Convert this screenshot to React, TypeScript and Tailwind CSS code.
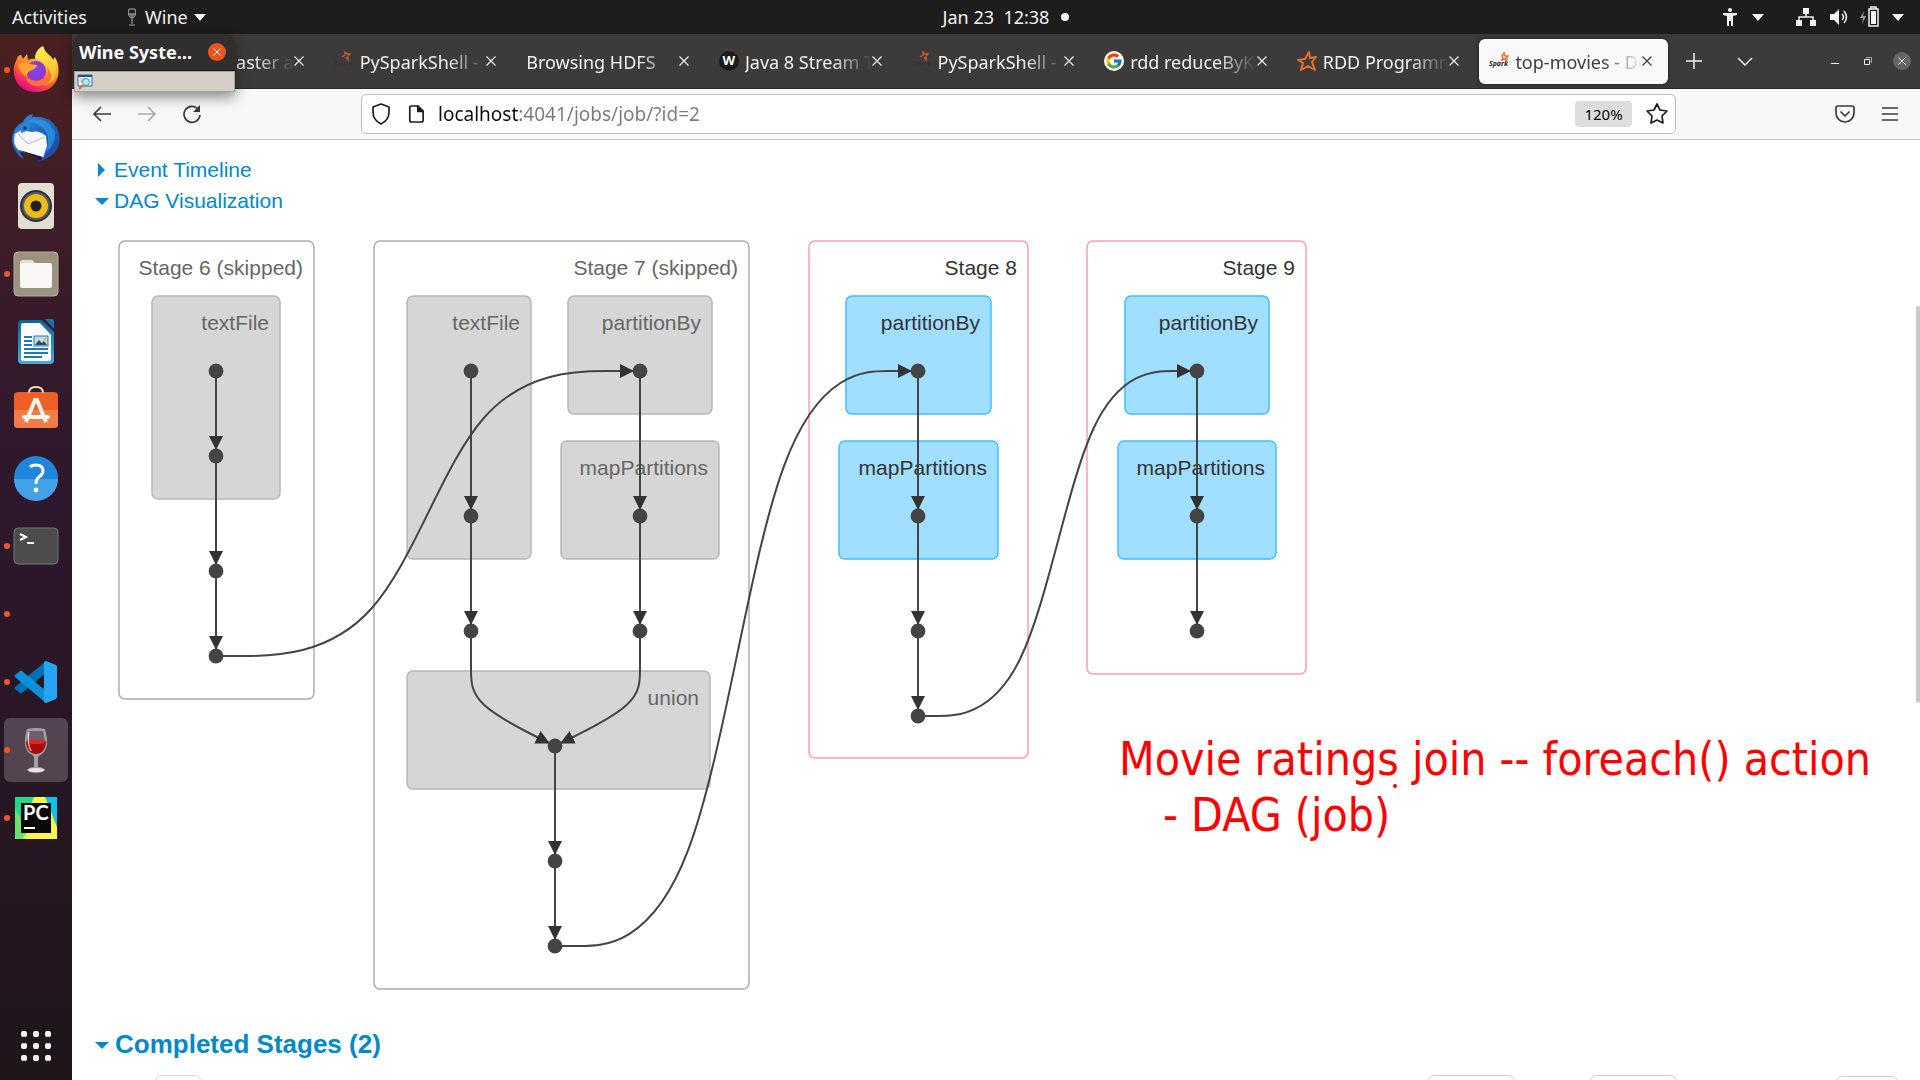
import React from "react";
import { FcGoogle } from "react-icons/fc";

type Pt = [number, number];

/* ---------- DAG geometry ---------- */

function basis(points: Pt[]): string {
  const n = points.length;
  const at = (i: number): Pt => points[Math.max(0, Math.min(n - 1, i))];
  const mix = (a: Pt, b: Pt, wa: number, wb: number): string =>
    `${((a[0] * wa + b[0] * wb) / (wa + wb)).toFixed(1)},${((a[1] * wa + b[1] * wb) / (wa + wb)).toFixed(1)}`;
  let d = `M${points[0]} L${mix(at(0), at(1), 5, 1)}`;
  for (let i = 0; i < n - 1; i++) {
    const a = at(i);
    const b = at(i + 1);
    const c = at(i + 2);
    const end = `${((a[0] + 4 * b[0] + c[0]) / 6).toFixed(1)},${((a[1] + 4 * b[1] + c[1]) / 6).toFixed(1)}`;
    d += ` C${mix(a, b, 2, 1)} ${mix(a, b, 1, 2)} ${end}`;
  }
  return d + ` L${points[n - 1]}`;
}

function cross(from: Pt, to: Pt): string {
  const dx = to[0] - from[0];
  return basis([from, [from[0] + dx * 0.4, from[1]], [from[0] + dx * 0.6, to[1]], [to[0] - 7, to[1]]]);
}

interface Box {
  x: number;
  y: number;
  w: number;
  h: number;
  label: string;
  kind: "skippedStage" | "stage" | "skippedOp" | "op";
}

const boxStyle: Record<Box["kind"], string> = {
  skippedStage: "fill-white stroke-[#adadad]",
  stage: "fill-white stroke-[#ff9db0]",
  skippedOp: "fill-[#d6d6d6] stroke-[#b7b7b7]",
  op: "fill-[#a0dfff] stroke-[#3ec0ff]",
};
const labelStyle: Record<Box["kind"], string> = {
  skippedStage: "fill-[#666666]",
  stage: "fill-[#333333]",
  skippedOp: "fill-[#666666]",
  op: "fill-[#333333]",
};

const boxes: Box[] = [
  { x: 47, y: 21, w: 195, h: 458, label: "Stage 6 (skipped)", kind: "skippedStage" },
  { x: 302, y: 21, w: 375, h: 748, label: "Stage 7 (skipped)", kind: "skippedStage" },
  { x: 737, y: 21, w: 219, h: 517, label: "Stage 8", kind: "stage" },
  { x: 1015, y: 21, w: 219, h: 433, label: "Stage 9", kind: "stage" },
  { x: 80, y: 76, w: 128, h: 203, label: "textFile", kind: "skippedOp" },
  { x: 335, y: 76, w: 124, h: 263, label: "textFile", kind: "skippedOp" },
  { x: 496, y: 76, w: 144, h: 118, label: "partitionBy", kind: "skippedOp" },
  { x: 489, y: 221, w: 158, h: 118, label: "mapPartitions", kind: "skippedOp" },
  { x: 335, y: 451, w: 303, h: 118, label: "union", kind: "skippedOp" },
  { x: 774, y: 76, w: 145, h: 118, label: "partitionBy", kind: "op" },
  { x: 767, y: 221, w: 159, h: 118, label: "mapPartitions", kind: "op" },
  { x: 1053, y: 76, w: 144, h: 118, label: "partitionBy", kind: "op" },
  { x: 1046, y: 221, w: 158, h: 118, label: "mapPartitions", kind: "op" },
];

const chains: Pt[][] = [
  [[144, 151], [144, 236], [144, 351], [144, 436]],
  [[399, 151], [399, 296], [399, 411]],
  [[568, 151], [568, 296], [568, 411]],
  [[483, 526], [483, 641], [483, 726]],
  [[846, 151], [846, 296], [846, 411], [846, 496]],
  [[1125, 151], [1125, 296], [1125, 411]],
];

const curves: string[] = [
  cross([144, 436], [568, 151]),
  cross([483, 726], [846, 151]),
  cross([846, 496], [1125, 151]),
  basis([[399, 411], [399, 450], [399, 484], [477, 523]]),
  basis([[568, 411], [568, 450], [568, 484], [489, 523]]),
];

function Dag() {
  return (
    <svg viewBox="0 0 1260 790" className="block h-[790px] w-[1260px]" role="img" aria-label="DAG Visualization">
      <defs>
        <marker id="arrow" viewBox="0 0 14 14" refX="13" refY="7" markerWidth="14" markerHeight="14" markerUnits="userSpaceOnUse" orient="auto">
          <path d="M0 0L14 7L0 14z" fill="#333" />
        </marker>
      </defs>
      {boxes.map((b, i) => (
        <g key={i}>
          <rect x={b.x} y={b.y} width={b.w} height={b.h} rx="6" strokeWidth="1.5" className={boxStyle[b.kind]} />
          <text x={b.x + b.w - 11} y={b.y + 34} textAnchor="end" fontSize="21" className={labelStyle[b.kind]}>
            {b.label}
          </text>
        </g>
      ))}
      <g fill="none" stroke="#444" strokeWidth="2">
        {chains.map((c, i) =>
          c.slice(1).map((p, j) => (
            <path key={`${i}-${j}`} d={`M${c[j]} L${p[0]},${p[1] - 7}`} markerEnd="url(#arrow)" />
          )),
        )}
        {curves.map((d, i) => (
          <path key={i} d={d} markerEnd="url(#arrow)" />
        ))}
      </g>
      {chains.map((c, i) => c.map((p, j) => <circle key={`${i}-${j}`} cx={p[0]} cy={p[1]} r="7.400" fill="#444" />))}
    </svg>
  );
}

/* ---------- Dock icons ---------- */

const Firefox = () => (
  <svg viewBox="0 0 48 48" className="size-12">
    <defs>
      <linearGradient id="ffa" x1="0.8" y1="0.05" x2="0.3" y2="1">
        <stop offset="0" stopColor="#fff44f" />
        <stop offset="0.35" stopColor="#ffa930" />
        <stop offset="0.65" stopColor="#ff5a36" />
        <stop offset="1" stopColor="#e3008d" />
      </linearGradient>
      <linearGradient id="ffy" x1="0" y1="0" x2="0.3" y2="1">
        <stop offset="0" stopColor="#fff65a" />
        <stop offset="1" stopColor="#ffb62c" />
      </linearGradient>
      <radialGradient id="ffp">
        <stop offset="0" stopColor="#7a4af0" />
        <stop offset="1" stopColor="#9434c8" />
      </radialGradient>
    </defs>
    <path d="M4 15Q6 8 9 9L11 13L15 8L16 14Q20 12 23 13Q23 4 31 0Q32 5 37 9Q40 11 41 14L43 11Q48 20 46 30Q42 45 25 46Q5 46 2 28Q1 20 4 15z" fill="url(#ffa)" />
    <path d="M23 13Q23 4 31 0Q32 5 37 9Q47 18 43 31Q39 40 29 39Q39 32 34 21Q31 15 23 13z" fill="url(#ffy)" />
    <circle cx="24" cy="25" r="10" fill="url(#ffp)" />
    <path d="M6 18Q13 15 18 18L25 19Q25 22 20 24Q14 26 15 31Q7 27 6 18z" fill="#ffa52f" />
    <path d="M14 30Q20 37 29 34Q40 30 34 20Q43 30 36 37Q27 43 18 38Q14 35 14 30z" fill="#ff7139" />
  </svg>
);

const Thunderbird = () => (
  <svg viewBox="0 0 48 48" className="size-12">
    <defs>
      <linearGradient id="tba" x1="0" y1="0" x2="1" y2="1">
        <stop offset="0" stopColor="#2f8fe0" />
        <stop offset="0.5" stopColor="#1f66c4" />
        <stop offset="1" stopColor="#1f3f9a" />
      </linearGradient>
    </defs>
    <path d="M11 8Q14 1 21 0L20 3Q37 1 45 14Q50 26 45 35Q39 45 25 48Q30 44 31 40L8 38L12 46Q1 38 0 27Q0 13 11 8z" fill="url(#tba)" />
    <path d="M3 20Q0 29 6 36L31 44L35 32L34 22Q27 16 20 18L9 16z" fill="#fafafa" />
    <path d="M6 20L16 30L33 23" fill="none" stroke="#b9bcc4" strokeWidth="1" />
    <path d="M4 35L31 43L28 47Q26 43 22 42z" fill="#1c1250" />
    <path d="M10 12Q20 5 28 12Q40 18 34 38Q44 30 43 18Q36 4 20 5z" fill="#2ea2e6" opacity="0.65" />
    <path d="M8 14Q10 8 17 9Q21 13 15 17L9 19z" fill="#2b84d2" />
    <circle cx="13" cy="14" r="1.6" fill="#0d2b52" />
  </svg>
);

const Rhythmbox = () => (
  <svg viewBox="0 0 48 48" className="size-12">
    <rect x="6" y="1" width="36" height="46" rx="4" fill="#e3ded3" />
    <circle cx="24" cy="24" r="16" fill="#2e3236" />
    <circle cx="24" cy="24" r="14" fill="#555a60" />
    <circle cx="24" cy="24" r="12" fill="#efb917" />
    <circle cx="24" cy="24" r="5.500" fill="#1f2226" />
  </svg>
);

const Files = () => (
  <svg viewBox="0 0 48 48" className="size-12">
    <rect x="2" y="2" width="44" height="44" rx="4" fill="#9b937f" stroke="#b5ad9b" />
    <path d="M8 13q0-3 3-3h9l4 4h12v10H8z" fill="#e4e0d6" />
    <rect x="8" y="13" width="32" height="25" rx="2" fill="#f9f8f6" />
  </svg>
);

const Writer = () => (
  <svg viewBox="0 0 48 48" className="size-12">
    <defs>
      <linearGradient id="wr" x1="0" y1="0" x2="0" y2="1">
        <stop offset="0" stopColor="#0d6496" />
        <stop offset="1" stopColor="#4aabdc" />
      </linearGradient>
    </defs>
    <path d="M10 2h20l12 12v28q0 4-4 4H10q-4 0-4-4V6q0-4 4-4z" fill="url(#wr)" />
    <path d="M33 1h7q2 0 2 2v8z" fill="#0f75ab" />
    <path d="M11 5h17l11 12v24q0 2-2 2H11q-2 0-2-2V7q0-2 2-2z" fill="#fdfdfd" />
    <path d="M12 19h8M12 23h8M12 27h8M12 31h24M12 35h24M12 39h18" stroke="#1b7cb5" strokeWidth="2" />
    <rect x="22" y="18" width="14" height="10" fill="#b8dff2" stroke="#1b7cb5" />
    <path d="M23 27l4-5 3 3 2-2 3 4z" fill="#3a4a55" />
    <circle cx="33" cy="21" r="1.500" fill="#f2b632" />
  </svg>
);

const Software = () => (
  <svg viewBox="0 0 48 48" className="size-12">
    <rect x="2" y="6" width="44" height="36" rx="4" fill="#ee5f26" />
    <path d="M2 24h44v14q0 4-4 4H6q-4 0-4-4z" fill="#f27c48" />
    <path d="M17 7q0-6 7-6t7 6" fill="none" stroke="#f5dfae" strokeWidth="2" />
    <path d="M14 36L23 14h2l9 22" fill="none" stroke="#fdf6f1" strokeWidth="4" />
    <path d="M12 31h24" stroke="#fdf6f1" strokeWidth="4" strokeLinecap="round" />
  </svg>
);

const Help = () => (
  <svg viewBox="0 0 48 48" className="size-12">
    <circle cx="24" cy="24" r="22" fill="#1f86dc" />
    <path d="M2 25a22 22 0 0 0 44 0z" fill="#43a2e6" />
    <path d="M18 13q2-2 6-2 7 0 7 6 0 3-4 6-3 2-3 7" fill="none" stroke="#fff" strokeWidth="3" />
    <circle cx="24" cy="36" r="2.400" fill="#fff" />
  </svg>
);

const Terminal = () => (
  <svg viewBox="0 0 48 48" className="size-12">
    <rect x="2" y="6" width="44" height="36" rx="4" fill="#4c4c4c" stroke="#747474" />
    <path d="M8 12l6 3-6 3M15 21h7" fill="none" stroke="#fff" strokeWidth="2" />
  </svg>
);

const VsCode = () => (
  <svg viewBox="0 0 48 48" className="size-12">
    <path d="M3 31l5 4q1 1 2 0L34 15V3L3 29q-1 1 0 2z" fill="#0070b3" />
    <path d="M3 17l5-4q1-1 2 0l24 20v12L3 19q-1-1 0-2z" fill="#0a91dc" />
    <path d="M34 3l10 4q1 1 1 2v30q0 1-1 2l-10 4q-2 0-2-2V5q0-2 2-2z" fill="#27a5f4" />
  </svg>
);

const WineGlass = () => (
  <svg viewBox="0 0 48 48" className="size-12">
    <path d="M15 3Q24 1 33 3Q38 20 31 27Q27 30 26 31V41Q33 42 33 44Q31 47 24 47T15 44Q16 42 22 41V31Q21 29 17 27Q10 20 15 3z" fill="#b9b3b8" opacity="0.8" />
    <path d="M17 5h14l2 10H15z" fill="#6d6069" />
    <path d="M14 15Q24 19 34 15Q34 22 30 26Q24 30 18 26Q14 22 14 15z" fill="#a80c0c" />
    <ellipse cx="24" cy="16" rx="9" ry="2" fill="#e2261c" />
    <path d="M17 6Q15 18 19 25" fill="none" stroke="#f5f0f3" strokeWidth="1" />
    <ellipse cx="24" cy="44" rx="8" ry="2" fill="#e9e6e8" />
  </svg>
);

const PyCharm = () => (
  <svg viewBox="0 0 48 48" className="size-12">
    <path d="M3 3h42v42H3z" fill="#21d789" />
    <path d="M34 3h11v30z" fill="#07c3f2" />
    <path d="M22 3h11l12 30v12H16L3 44L10 30z" fill="#fcf84a" />
    <path d="M3 14L16 38L10 45H3z" fill="#6be36b" />
    <path d="M9 9h30v30H9z" fill="#070707" />
    <path d="M12 34h11" stroke="#fff" strokeWidth="2" />
    <text x="11" y="26" fontSize="20" fontWeight="700" fill="#fff" fontFamily="Lato, sans-serif">PC</text>
  </svg>
);

const dock: { name: string; icon?: React.ReactNode; running?: boolean; active?: boolean }[] = [
  { name: "Firefox", icon: <Firefox />, running: true },
  { name: "Thunderbird", icon: <Thunderbird /> },
  { name: "Rhythmbox", icon: <Rhythmbox /> },
  { name: "Files", icon: <Files />, running: true },
  { name: "LibreOffice Writer", icon: <Writer /> },
  { name: "Ubuntu Software", icon: <Software /> },
  { name: "Help", icon: <Help /> },
  { name: "Terminal", icon: <Terminal />, running: true },
  { name: "Running application", running: true },
  { name: "Visual Studio Code", icon: <VsCode />, running: true },
  { name: "Wine", icon: <WineGlass />, running: true, active: true },
  { name: "PyCharm", icon: <PyCharm />, running: true },
];

function Dock() {
  return (
    <nav className="flex w-[72px] shrink-0 flex-col bg-linear-to-b from-[#4a2020] via-[#2f182e] via-40% to-[#20151b] pt-0.5">
      {dock.map((d) => (
        <button
          key={d.name}
          aria-label={d.name}
          className="relative flex h-[68px] shrink-0 items-center justify-center"
        >
          {d.active && <span className="absolute inset-x-1 inset-y-0.5 rounded-md bg-white/20" />}
          {d.running && <span className="absolute left-1 size-1.5 rounded-full bg-[#f0562a]" />}
          <span className="relative">{d.icon}</span>
        </button>
      ))}
      <button aria-label="Show Applications" className="mx-auto mt-auto mb-[19px] grid grid-cols-3 gap-1.5">
        {Array.from({ length: 9 }, (_, i) => (
          <span key={i} className="size-1.5 rounded-[2px] bg-[#f2f0ed]" />
        ))}
      </button>
    </nav>
  );
}

/* ---------- Top bar ---------- */

const Caret = () => (
  <svg viewBox="0 0 12 7" className="h-[7px] w-3">
    <path d="M0 0h12L6 7z" fill="#f2f2f2" />
  </svg>
);

function TopBar() {
  return (
    <header className="grid h-[34px] shrink-0 grid-cols-[1fr_auto_1fr] items-center bg-[#1d1d1d] text-[18px] text-[#f2f2f2]">
      <div className="flex items-center pl-3">
        <button>Activities</button>
        <button className="ml-10 flex items-center">
          <svg viewBox="0 0 10 18" className="mr-2 h-[18px] w-2.5" fill="none" stroke="#a5a5a5">
            <path d="M2 1h6q2 8-3 9Q0 9 2 1zM5 10v6M2 17h6" />
            <path d="M2 5h6v2q-1 2-3 2T2 7z" fill="#777" stroke="none" />
          </svg>
          Wine
          <span className="ml-1.5">
            <Caret />
          </span>
        </button>
      </div>
      <button className="flex items-center gap-3 pl-[92px]">
        <span className="whitespace-pre">Jan 23  12:38</span>
        <span className="size-2 rounded-full bg-[#f2f2f2]" />
      </button>
      <div className="flex items-center justify-end pr-4">
        <button aria-label="Accessibility" className="flex items-center gap-3.5">
          <svg viewBox="0 0 16 18" className="h-[18px] w-4" fill="#f2f2f2">
            <circle cx="8" cy="2" r="2" />
            <path d="M1 5h14v2l-4 1v10H9v-5H7v5H5V8L1 7z" />
          </svg>
          <Caret />
        </button>
        <button aria-label="System menu" className="ml-8 flex items-center">
          <svg viewBox="0 0 20 18" className="h-[18px] w-5" fill="#f2f2f2">
            <path d="M7 0h6v6H7zM0 12h6v6H0zM14 12h6v6h-6z" />
            <path d="M10 6v3M3 12V9h14v3" fill="none" stroke="#f2f2f2" strokeWidth="1.500" />
          </svg>
          <svg viewBox="0 0 20 18" className="ml-3.5 h-[18px] w-5" fill="#f2f2f2">
            <path d="M0 6h4l5-5v16l-5-5H0z" />
            <path d="M12 6q3 3 0 6M14 3q5 6 0 12" fill="none" stroke="#f2f2f2" strokeWidth="1.500" />
          </svg>
          <svg viewBox="0 0 20 22" className="ml-2.5 h-[22px] w-5">
            <path d="M4 5L0 12h3l-1 6 4-8H3z" fill="#9a9a9a" />
            <path d="M9 3h9v17H9zM11 1h5v2h-5z" fill="none" stroke="#f2f2f2" strokeWidth="1.500" />
            <path d="M11 5h5v13h-5z" fill="#f2f2f2" />
          </svg>
          <span className="ml-3">
            <Caret />
          </span>
        </button>
      </div>
    </header>
  );
}

/* ---------- Browser tabs ---------- */

const starPath = "M12 1L13 7L19 6L15 11L18 19L11 15L4 19L6 12L1 9L8 8z";

const DimSpark = () => (
  <svg viewBox="0 0 20 20" className="size-5 shrink-0">
    <text x="0" y="15" fontSize="7" fontStyle="italic" fontWeight="700" fill="#363433">Spark</text>
    <path d="M8 6l3-2 0-3 2 2 3 0-2 2 0 4-2-3" fill="none" stroke="#c95d2d" strokeWidth="1.300" />
  </svg>
);
const SparkFav = () => (
  <svg viewBox="0 0 20 20" className="size-5 shrink-0">
    <text x="0" y="15" fontSize="7" fontStyle="italic" fontWeight="700" fill="#222">Spark</text>
    <path d="M13 5l2-3 1 3 3 0-2 2 1 4-2-3-3 1 1-2z" fill="none" stroke="#e8702f" strokeWidth="1.500" />
  </svg>
);
const StarFav = () => (
  <svg viewBox="0 0 20 20" className="size-5 shrink-0">
    <path d={starPath} fill="none" stroke="#e8702f" strokeWidth="2" strokeLinejoin="round" />
  </svg>
);
const WFav = () => (
  <span className="flex size-5 shrink-0 items-center justify-center rounded-full bg-[#1b1b1b] text-[13px] font-bold text-white">W</span>
);
const GFav = () => (
  <span className="flex size-5 shrink-0 items-center justify-center rounded-full bg-white">
    <FcGoogle className="size-[18px]" />
  </span>
);

const tabs: { title: string; icon?: React.ReactNode; active?: boolean }[] = [
  { title: "Spark Master at", icon: <DimSpark /> },
  { title: "PySparkShell - S", icon: <DimSpark /> },
  { title: "Browsing HDFS" },
  { title: "Java 8 Stream T", icon: <WFav /> },
  { title: "PySparkShell - S", icon: <DimSpark /> },
  { title: "rdd reduceByK", icon: <GFav /> },
  { title: "RDD Programm", icon: <StarFav /> },
  { title: "top-movies - De", icon: <SparkFav />, active: true },
];

const Cross = ({ className }: { className: string }) => (
  <svg viewBox="0 0 10 10" className={className} fill="none" stroke="currentColor" strokeWidth="1.200">
    <path d="M0.500 0.500l9 9M9.500 0.500l-9 9" />
  </svg>
);

function TabStrip() {
  return (
    <div className="flex h-[55px] shrink-0 items-center border-b border-[#2a2a2a] bg-[#3d3b3a] text-[18px] text-[#f0f0f0]">
      <div role="tablist" className="flex min-w-0 flex-1 pl-[57px]">
        {tabs.map((t, i) => (
          <div key={i} className="min-w-0 flex-1 px-0.5">
            <div
              className={
                t.active
                  ? "flex h-[45px] items-center rounded-md bg-[#f9f9fa] pr-4 pl-2.5 text-[#3b3b3f] shadow-[0_0_4px_#0008]"
                  : "flex h-[45px] items-center pr-4 pl-2.5"
              }
            >
              <button role="tab" aria-selected={!!t.active} className="flex min-w-0 flex-1 items-center gap-1.5">
                {t.icon}
                <span className="min-w-0 flex-1 overflow-hidden pt-0.5 text-left whitespace-nowrap [mask-image:linear-gradient(to_left,transparent,black_40px)]">
                  {t.title}
                </span>
              </button>
              <button aria-label="Close tab" className="shrink-0">
                <Cross className="size-2.5" />
              </button>
            </div>
          </div>
        ))}
      </div>
      <div className="flex w-[250px] shrink-0 items-center pr-[9px] pl-4">
        <button aria-label="New tab">
          <svg viewBox="0 0 16 16" className="size-4" stroke="currentColor" strokeWidth="1.500">
            <path d="M8 0v16M0 8h16" />
          </svg>
        </button>
        <button aria-label="List all tabs" className="ml-[35px]">
          <svg viewBox="0 0 16 9" className="h-[9px] w-4" fill="none" stroke="currentColor" strokeWidth="1.500">
            <path d="M1 1l7 7 7-7" />
          </svg>
        </button>
        <div className="ml-auto flex items-center">
          <button aria-label="Minimize" className="mt-1 h-px w-2 bg-white" />
          <button aria-label="Restore" className="ml-6">
            <svg viewBox="0 0 10 10" className="size-2.5" fill="none" stroke="currentColor">
              <path d="M1.500 3.500h5v5h-5z" />
              <path d="M3 1.500h5.500V7" opacity="0.600" />
            </svg>
          </button>
          <button aria-label="Close" className="ml-5 flex size-[18px] items-center justify-center rounded-full bg-[#656565]">
            <Cross className="size-2" />
          </button>
        </div>
      </div>
    </div>
  );
}

function Toolbar() {
  return (
    <div className="flex h-[51px] shrink-0 items-center border-b border-[#c2c2c4] bg-[#f8f8f9] px-5 text-[#3a3a3e]">
      <button aria-label="Back">
        <svg viewBox="0 0 20 20" className="size-5" fill="none" stroke="currentColor" strokeWidth="1.700">
          <path d="M19 10H2M9 3l-7 7 7 7" />
        </svg>
      </button>
      <button aria-label="Forward" className="ml-[25px] text-[#aaaaac]">
        <svg viewBox="0 0 20 20" className="size-5" fill="none" stroke="currentColor" strokeWidth="1.700">
          <path d="M1 10h17M11 3l7 7-7 7" />
        </svg>
      </button>
      <button aria-label="Reload" className="ml-[25px]">
        <svg viewBox="0 0 20 20" className="size-5" fill="none" stroke="currentColor" strokeWidth="1.700">
          <path d="M16 5a8 8 0 1 0 2 6" />
          <path d="M18 1v7h-7z" fill="currentColor" stroke="none" />
        </svg>
      </button>
      <div className="ml-[159px] flex h-10 w-full max-w-[1315px] min-w-0 items-center rounded-[5px] border border-[#bdbdc0] bg-white pr-[7px] pl-[9px] text-[#1c1b22]">
        <svg viewBox="0 0 20 22" className="h-[22px] w-5 shrink-0" fill="none" stroke="currentColor" strokeWidth="1.700">
          <path d="M10 1l8 3v5c0 6-4 10-8 12C6 19 2 15 2 9V4z" strokeLinejoin="round" />
        </svg>
        <svg viewBox="0 0 18 20" className="ml-[17px] h-[18px] w-4 shrink-0" fill="none" stroke="currentColor" strokeWidth="1.900">
          <path d="M4 1h7l6 6v10q0 2-2 2H4q-2 0-2-2V3q0-2 2-2z" />
          <path d="M11 1l6 6h-6z" fill="currentColor" />
        </svg>
        <input
          aria-label="Address"
          defaultValue="localhost:4041/jobs/job/?id=2"
          className="ml-3.5 min-w-0 flex-1 bg-[linear-gradient(90deg,#0c0c0d_81px,#7a7a7c_81px)] bg-clip-text text-[19px] text-transparent outline-none"
        />
        <button className="flex h-[26px] w-[57px] shrink-0 items-center justify-center rounded-sm bg-[#dedede] text-[15px] text-black">120%</button>
        <button aria-label="Bookmark this page" className="ml-3.5 shrink-0">
          <svg viewBox="0 0 22 22" className="size-[22px]" fill="none" stroke="currentColor" strokeWidth="1.700" strokeLinejoin="round">
            <path d="M11 1l3 6 7 1-5 5 1 7-6-3-6 3 1-7-5-5 7-1z" />
          </svg>
        </button>
      </div>
      <div className="ml-auto flex shrink-0 items-center pr-0.5">
        <button aria-label="Save to Pocket">
          <svg viewBox="0 0 20 18" className="h-[18px] w-5" fill="none" stroke="currentColor" strokeWidth="1.700" strokeLinecap="round" strokeLinejoin="round">
            <path d="M3 1h14q2 0 2 2v5a9 9 0 0 1-18 0V3q0-2 2-2z" />
            <path d="M6 7l4 4 4-4" />
          </svg>
        </button>
        <button aria-label="Open application menu" className="ml-[27px]">
          <svg viewBox="0 0 16 14" className="h-3.5 w-4" stroke="currentColor" strokeWidth="1.500">
            <path d="M0 1h16M0 7h16M0 13h16" />
          </svg>
        </button>
      </div>
    </div>
  );
}

function WineTray() {
  return (
    <aside className="absolute top-0 left-0.5 w-[161px] rounded-t-lg font-bold shadow-[0_5px_14px_#0007]">
      <div className="flex h-[37px] items-center justify-between rounded-t-lg border-b border-[#1c1c1c] bg-[#302e2e] pr-[9px] pl-[5px] text-[18px] text-white">
        <span>Wine Syste…</span>
        <button aria-label="Close Wine System Tray" className="flex size-[18px] items-center justify-center rounded-full bg-[#e95420]">
          <Cross className="size-2" />
        </button>
      </div>
      <div className="flex h-[21px] items-center border border-[#a5a19b] bg-[#d4cfc8] pl-0.5">
        <svg viewBox="0 0 16 16" className="size-4">
          <path d="M1 1h14v11H1z" fill="#f4f3ee" stroke="#2f6c9c" />
          <path d="M1 1h14v2H1z" fill="#1d4e9e" />
          <path d="M3 5h5M3 7h4" stroke="#b9b28c" />
          <circle cx="9" cy="8" r="3.500" fill="#b8e6f4" stroke="#5b8da6" />
          <path d="M6 11l-4 4" stroke="#c77b2c" strokeWidth="2" />
        </svg>
      </div>
    </aside>
  );
}

/* ---------- Page ---------- */

function SparkPage() {
  return (
    <main className="relative flex-1 overflow-hidden bg-white font-['Liberation_Sans',Arial,sans-serif]">
      <div className="flex flex-col items-start pt-3.5 pl-[23px] text-[21px] leading-[31px] text-[#0088cc]">
        <a href="#timeline" className="flex items-center">
          <svg viewBox="0 0 14 14" className="mr-[5px] size-3.5" fill="currentColor">
            <path d="M3 0l7 7-7 7z" />
          </svg>
          Event Timeline
        </a>
        <a href="#dag" className="flex items-center">
          <svg viewBox="0 0 14 14" className="mr-[5px] size-3.5" fill="currentColor">
            <path d="M0 4h14l-7 7z" />
          </svg>
          DAG Visualization
        </a>
      </div>
      <div className="mt-1">
        <Dag />
      </div>
      <h4 className="mt-[18px] pl-[23px] text-[26px] leading-8 font-bold text-[#0088cc]">
        <a href="#completed" className="flex items-center">
          <svg viewBox="0 0 14 14" className="mr-1.5 size-3.5" fill="currentColor">
            <path d="M0 5h14l-7 7z" />
          </svg>
          Completed Stages (2)
        </a>
      </h4>
      <div className="mt-[15px] flex pr-[22px] pl-[83px]">
        <div className="h-10 w-[46px] rounded-md border border-[#d6d6d6]" />
        <div className="ml-auto h-10 w-[87px] rounded-md border border-[#ced0d6]" />
        <div className="ml-[75px] h-10 w-[87px] rounded-md border border-[#ced0d6]" />
        <div className="mt-px ml-[159px] h-10 w-[62px] rounded-md border border-[#ced0d6]" />
      </div>
      <div className="absolute top-[591px] left-[1047px] font-['DejaVu_Sans_Condensed','DejaVu_Sans',sans-serif] text-[46px] leading-[56px] whitespace-nowrap text-[#ff0000]">
        <p>Movie ratings join -- foreach() action</p>
        <p className="pl-11">- DAG (job)</p>
        <span className="absolute top-[53px] left-[274px] size-1 rounded-full bg-[#ff0000]" />
      </div>
      <div className="absolute top-[166px] right-0 h-[397px] w-1 rounded-full bg-[#c9c9cc]" />
    </main>
  );
}

export default function App() {
  return (
    <div className="flex h-screen flex-col overflow-hidden font-['Noto_Sans',sans-serif]">
      <TopBar />
      <div className="flex min-h-0 flex-1">
        <Dock />
        <div className="relative flex min-w-0 flex-1 flex-col">
          <TabStrip />
          <Toolbar />
          <SparkPage />
          <WineTray />
        </div>
      </div>
    </div>
  );
}
